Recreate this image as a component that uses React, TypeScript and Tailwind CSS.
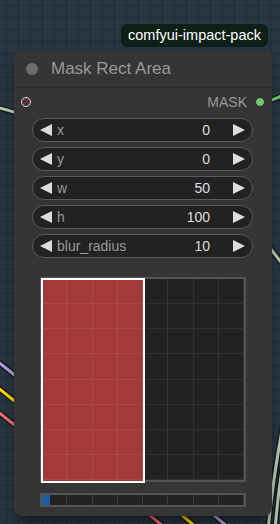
import React from "react";

const widgets = [
  { name: "x", value: "0" },
  { name: "y", value: "0" },
  { name: "w", value: "50" },
  { name: "h", value: "100" },
  { name: "blur_radius", value: "10" },
];

const wires = [
  { d: "M -4 107 Q 8 110 20 114", c: "#b3c9ad" },
  { d: "M 262 104 Q 272 100 284 95", c: "#72c672" },
  { d: "M 270 248 L 284 266", c: "#b3c9ad" },
  { d: "M 284 420 Q 274 470 268 530", c: "#b3c9ad" },
  { d: "M 288 436 Q 279 480 275 530", c: "#b3c9ad" },
  { d: "M -3 361 L 17 377", c: "#b39ddb" },
  { d: "M -3 387 L 17 403", c: "#ffd500" },
  { d: "M -3 411 L 17 427", c: "#f07070" },
  { d: "M 146 512 L 170 532", c: "#f07070" },
  { d: "M 178 512 L 202 532", c: "#ffd500" },
  { d: "M 210 512 L 234 532", c: "#b39ddb" },
];

function Arrow({ dir }: { dir: "l" | "r" }) {
  return (
    <svg width="12" height="12" viewBox="0 0 12 12" className="shrink-0">
      {dir === "l" ? <path d="M12 0 L0 6 L12 12 Z" fill="#dddddd" /> : <path d="M0 0 L12 6 L0 12 Z" fill="#dddddd" />}
    </svg>
  );
}

export default function App() {
  return (
    <div
      className="relative w-[280px] h-[524px] overflow-hidden bg-[#283642] bg-[linear-gradient(to_right,#1f2b35_1px,transparent_1px),linear-gradient(to_bottom,#1f2b35_1px,transparent_1px)] bg-[size:12px_12px] bg-[position:6px_5px]"
      style={{ fontFamily: '"Liberation Sans", Arial, sans-serif' }}
    >
      {/* wires behind the node */}
      <svg className="absolute inset-0" width="280" height="524">
        {wires.map((w, i) => (
          <g key={i}>
            <path d={w.d} stroke="#151b20" strokeWidth="6" fill="none" />
            <path d={w.d} stroke={w.c} strokeWidth="3" fill="none" />
          </g>
        ))}
      </svg>

      <div className="relative flex flex-col pt-[24px]">
        <div className="self-end mr-[12px] h-[23px] px-[7px] flex items-center rounded-[6px] bg-[#0e1f15] text-white text-[14.5px] leading-none">
          comfyui-impact-pack
        </div>

        <div className="ml-[14px] mt-[3px] w-[258px] h-[466px] rounded-[8px] bg-[#353535] shadow-lg shadow-black/40 flex flex-col">
          <div className="h-[38px] flex items-center border-b border-[#2b2b2b]">
            <div className="ml-[12px] w-[12px] h-[12px] rounded-full bg-[#6e6e6e]" />
            <span className="ml-[13px] text-[17px] text-[#999999] leading-none">Mask Rect Area</span>
          </div>

          <div className="h-[28px] flex items-center">
            <div className="ml-[7px] w-[10px] h-[10px] rounded-full bg-[#5c3030] border border-[#e0e0e0]" />
            <span className="ml-auto text-[14px] text-[#999999] leading-none">MASK</span>
            <div className="ml-[8px] mr-[7px] w-[10px] h-[10px] rounded-full bg-[#72c672] border border-[#2a2a2a]" />
          </div>

          <div className="mt-[2px] ml-[18px] w-[221px] flex flex-col gap-[5px]">
            {widgets.map((w) => (
              <div
                key={w.name}
                className="h-[24px] rounded-full border border-[#5a5a5a] bg-[#222222] flex items-center pl-[7px] pr-[7px] text-[14px] leading-none"
              >
                <Arrow dir="l" />
                <span className="ml-[5px] text-[#999999]">{w.name}</span>
                <span className="ml-auto text-[#dddddd]">{w.value}</span>
                <span className="ml-[23px]">
                  <Arrow dir="r" />
                </span>
              </div>
            ))}
          </div>

          <div className="mt-[19px] ml-[26px] w-[206px] h-[205px] border-2 border-[#555555] bg-[#222222] relative">
            <div className="absolute left-[-1px] top-[-1px] w-[104px] h-[205px] bg-[#a33a3a] border-2 border-white" />
            <div className="absolute inset-0 grid grid-cols-8 grid-rows-8">
              {Array.from({ length: 64 }).map((_, i) => (
                <div key={i} className="border-r border-b border-[#ffffff14]" />
              ))}
            </div>
          </div>

          <div className="mt-[11px] ml-[26px] w-[206px] h-[14px] border-2 border-[#555555] bg-[#222222] grid grid-cols-8 relative">
            {Array.from({ length: 8 }).map((_, i) => (
              <div key={i} className="border-r border-[#3a3a3a]" />
            ))}
            <div className="absolute left-0 top-0 w-[8px] h-full bg-[#1f5ca6]" />
          </div>
        </div>
      </div>
    </div>
  );
}
